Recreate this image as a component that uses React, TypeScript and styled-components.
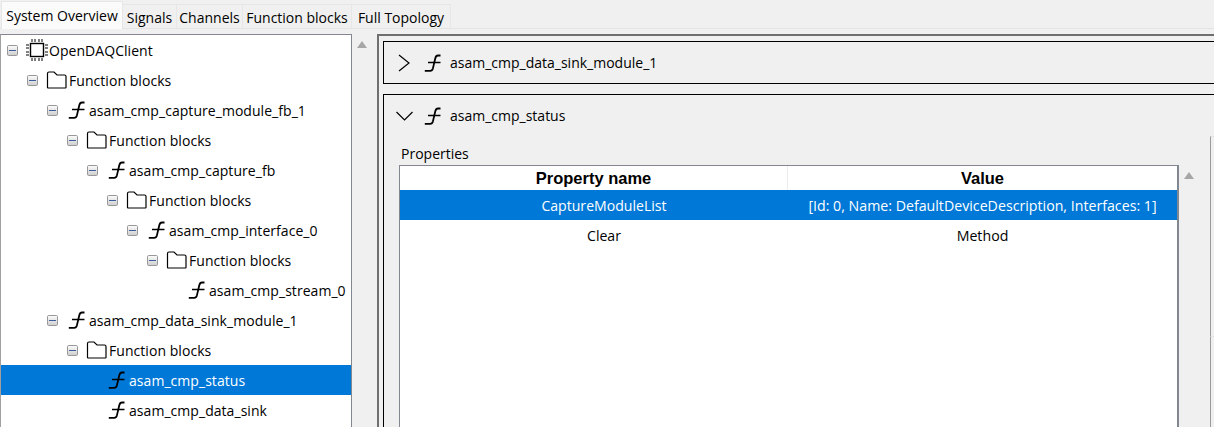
import React from "react";
import styled, { createGlobalStyle } from "styled-components";

const Global = createGlobalStyle`
  html, body { margin: 0; padding: 0; background: #f0f0f0; }
  body { font-family: "Open Sans", "Noto Sans", sans-serif; font-size: 14px; color: #000; overflow: hidden; }
`;

const Page = styled.div`
  width: 1214px; height: 427px; display: flex; flex-direction: column; overflow: hidden; background: #f0f0f0;
`;
const TabBar = styled.div`
  display: flex; align-items: flex-end; height: 28px; padding-left: 1px; flex: none; border-bottom: 1px solid #e4e4e4;
`;
const Tab = styled.div<{ $active?: boolean; $w: number }>`
  box-sizing: border-box; height: ${p => (p.$active ? 28 : 25)}px; width: ${p => p.$w}px; margin-bottom: -1px;
  display: flex; align-items: center; justify-content: center; white-space: nowrap;
  padding-top: ${p => (p.$active ? 0 : 1)}px;
  background: ${p => (p.$active ? "#fbfbfb" : "#f0f0f0")};
  border: 1px solid #e6e6e6; border-bottom: ${p => (p.$active ? "none" : "1px solid #e4e4e4")};
  margin-left: ${p => (p.$active ? 0 : -1)}px; font-size: 14px;
`;
const Body = styled.div`
  flex: 1; display: flex; padding-top: 5px; min-height: 0;
`;
const TreePane = styled.div`
  box-sizing: border-box; width: 352px; flex: none; background: #fff; border: 1px solid #828790; border-bottom: none;
  border-left-color: #a0a0a0; overflow: hidden;
`;
const Row = styled.div<{ $depth: number; $selected?: boolean }>`
  height: 30px; display: flex; align-items: center; white-space: nowrap;
  padding-left: ${p => 4 + p.$depth * 20}px;
  background: ${p => (p.$selected ? "#0078d7" : "transparent")};
  color: ${p => (p.$selected ? "#fff" : "#000")};
`;
const ExpanderSlot = styled.span`
  width: 19px; padding-left: 1px; flex: none; display: flex; align-items: center;
`;
const IconSlot = styled.span`
  width: 24px; height: 24px; flex: none; display: flex; align-items: center; justify-content: center;
`;
const Label = styled.span`
  letter-spacing: 0.05px;
`;
const Gutter = styled.div`
  width: 25px; flex: none; display: flex; justify-content: center; padding-top: 7px; box-sizing: border-box;
`;
const Arrow = styled.div`
  width: 0; height: 0; border-left: 5px solid transparent; border-right: 5px solid transparent; border-bottom: 7px solid #a6a6a6;
  margin-left: -5px;
`;
const RightPane = styled.div`
  flex: 1; min-width: 0; border-left: 2px solid #6f6f6f; border-top: 2px solid #6f6f6f; padding: 5px 0 0 4px;
  display: flex; flex-direction: column; gap: 10px; box-sizing: border-box;
`;
const Card = styled.section<{ $grow?: boolean }>`
  border: 1px solid #000; border-right: none; box-sizing: border-box; flex: ${p => (p.$grow ? "1" : "none")};
  height: ${p => (p.$grow ? "auto" : "43px")}; ${p => (p.$grow ? "border-bottom: none; min-height: 0;" : "")}
`;
const CardHead = styled.div`
  height: 41px; display: flex; align-items: center; padding-left: 11px;
`;
const ChevronSlot = styled.span`
  width: 20px; flex: none; display: flex; justify-content: center; margin-right: 8px;
`;
const CardTitle = styled.span`
  font-size: 14px; margin-left: 7px;
`;
const CardBody = styled.div`
  display: flex; padding-left: 15px; height: 291px;
`;
const PropsColumn = styled.div`
  width: 780px; flex: none; display: flex; flex-direction: column;
`;
const PropsLabel = styled.div`
  height: 28px; line-height: 35px; padding-left: 2px; font-size: 14px; white-space: nowrap; margin-bottom: 1px;
`;
const Table = styled.div`
  flex: 1; background: #fff; border: 1px solid #828790; border-bottom: none; border-right-width: 2px; box-sizing: border-box; overflow: hidden;
`;
const TableRow = styled.div<{ $selected?: boolean }>`
  display: grid; grid-template-columns: 388px 1fr; height: 30px; align-items: center; text-align: center; white-space: nowrap;
  background: ${p => (p.$selected ? "#0078d7" : "transparent")};
  color: ${p => (p.$selected ? "#fff" : "#000")};
`;
const HeaderRow = styled.div`
  display: grid; grid-template-columns: 388px 1fr; height: 24px; align-items: center; text-align: center;
  font-family: "Liberation Sans", Arial, sans-serif; font-weight: 700; font-size: 16.5px;
`;
const HeaderCell = styled.div<{ $divider?: boolean }>`
  height: 100%; line-height: 24px; ${p => (p.$divider ? "border-right: 1px solid #ececec;" : "")}
`;
const NameCell = styled.div`
  padding-left: 20px; font-size: 14.1px;
`;
const ValueCell = styled.div`
  font-size: 14.2px;
`;
const SideGutter = styled.div`
  width: 31px; flex: none; display: flex; justify-content: flex-start; padding: 36px 0 0 10px; box-sizing: border-box;
`;
const SideColumn = styled.div`
  flex: 1; display: flex; flex-direction: column;
`;
const SideBox = styled.div<{ $h: number }>`
  height: ${p => p.$h}px; box-sizing: border-box; border-left: 1px solid #9a9a9a; border-top: 1px solid #e4e4e4; flex: none;
`;

const Expander = () => (
  <svg width="13" height="13" viewBox="0 0 13 13">
    <defs>
      <linearGradient id="xg" x1="0" y1="0" x2="0" y2="1">
        <stop offset="0" stopColor="#fdfdfd" />
        <stop offset="1" stopColor="#cdcdcd" />
      </linearGradient>
    </defs>
    <rect x="1.5" y="1.5" width="10" height="10" rx="1.2" fill="url(#xg)" stroke="#989898" />
    <path d="M3 6.5h7" stroke="#3f5c9a" strokeWidth="1" />
  </svg>
);

const FnIcon = () => (
  <svg width="20" height="22" viewBox="0 0 20 22" fill="none" stroke="#000">
    <path d="M17.500 3.500H15C13.400 3.500 12.800 4.200 12.300 6.200L9.900 16.400C9.400 18.200 8.800 18.800 7.200 18.800H1.800" strokeWidth="1.800" />
    <path d="M5 10.500H17.500" strokeWidth="1.500" />
  </svg>
);

const ChipIcon = () => (
  <svg width="24" height="24" viewBox="0 0 24 24" fill="none" stroke="#000">
    <rect x="5.500" y="5.500" width="13" height="13" strokeWidth="1.400" />
    <path
      d="M7 1v3M10 1v3M14 1v3M17 1v3M7 20v3M10 20v3M14 20v3M17 20v3M1 7h3M1 10h3M1 14h3M1 17h3M20 7h3M20 10h3M20 14h3M20 17h3"
      strokeWidth="1"
    />
  </svg>
);

const FolderIcon = () => (
  <svg width="22" height="20" viewBox="0 0 22 20" fill="#fff" stroke="#000" strokeWidth="1.200">
    <path d="M1.500 3.500q0 -1.500 1.500 -1.500h5l3 3h7.500q1.500 0 1.500 1.500v11q0 .5 -.5 .5h-17.500q-.5 0 -.5 -.5z" />
  </svg>
);

const ChevronRight = () => (
  <svg width="14" height="18" viewBox="0 0 14 18" fill="none" stroke="#000" strokeWidth="1.200">
    <path d="M1 1L11 9L1 17" />
  </svg>
);
const ChevronDown = () => (
  <svg width="18" height="12" viewBox="0 0 18 12" fill="none" stroke="#000" strokeWidth="1.200">
    <path d="M0.500 2L8.500 10L16.500 2" />
  </svg>
);

type Node = { depth: number; icon: "chip" | "folder" | "fn"; text: string; leaf?: boolean; selected?: boolean };
const nodes: Node[] = [
  { depth: 0, icon: "chip", text: "OpenDAQClient" },
  { depth: 1, icon: "folder", text: "Function blocks" },
  { depth: 2, icon: "fn", text: "asam_cmp_capture_module_fb_1" },
  { depth: 3, icon: "folder", text: "Function blocks" },
  { depth: 4, icon: "fn", text: "asam_cmp_capture_fb" },
  { depth: 5, icon: "folder", text: "Function blocks" },
  { depth: 6, icon: "fn", text: "asam_cmp_interface_0" },
  { depth: 7, icon: "folder", text: "Function blocks" },
  { depth: 8, icon: "fn", text: "asam_cmp_stream_0", leaf: true },
  { depth: 2, icon: "fn", text: "asam_cmp_data_sink_module_1" },
  { depth: 3, icon: "folder", text: "Function blocks" },
  { depth: 4, icon: "fn", text: "asam_cmp_status", leaf: true, selected: true },
  { depth: 4, icon: "fn", text: "asam_cmp_data_sink", leaf: true },
];

const icons = { chip: <ChipIcon />, folder: <FolderIcon />, fn: <FnIcon /> };

export default function App() {
  return (
    <Page>
      <Global />
      <TabBar>
        <Tab $active $w={122}>System Overview</Tab>
        <Tab $w={55}>Signals</Tab>
        <Tab $w={67}>Channels</Tab>
        <Tab $w={110}>Function blocks</Tab>
        <Tab $w={100}>Full Topology</Tab>
      </TabBar>
      <Body>
        <TreePane>
          {nodes.map((n, i) => (
            <Row key={i} $depth={n.depth} $selected={n.selected}>
              <ExpanderSlot>{n.leaf ? null : <Expander />}</ExpanderSlot>
              <IconSlot>{icons[n.icon]}</IconSlot>
              <Label>{n.text}</Label>
            </Row>
          ))}
        </TreePane>
        <Gutter><Arrow /></Gutter>
        <RightPane>
          <Card>
            <CardHead>
              <ChevronSlot><ChevronRight /></ChevronSlot>
              <FnIcon />
              <CardTitle>asam_cmp_data_sink_module_1</CardTitle>
            </CardHead>
          </Card>
          <Card $grow>
            <CardHead>
              <ChevronSlot><ChevronDown /></ChevronSlot>
              <FnIcon />
              <CardTitle>asam_cmp_status</CardTitle>
            </CardHead>
            <CardBody>
              <PropsColumn>
                <PropsLabel>Properties</PropsLabel>
                <Table>
                  <HeaderRow>
                    <HeaderCell $divider>Property name</HeaderCell>
                    <HeaderCell>Value</HeaderCell>
                  </HeaderRow>
                  <TableRow $selected>
                    <NameCell>CaptureModuleList</NameCell>
                    <ValueCell>[Id: 0, Name: DefaultDeviceDescription, Interfaces: 1]</ValueCell>
                  </TableRow>
                  <TableRow>
                    <NameCell>Clear</NameCell>
                    <ValueCell>Method</ValueCell>
                  </TableRow>
                </Table>
              </PropsColumn>
              <SideGutter><Arrow /></SideGutter>
              <SideColumn>
                <SideBox $h={200} />
                <SideBox $h={91} />
              </SideColumn>
            </CardBody>
          </Card>
        </RightPane>
      </Body>
    </Page>
  );
}
